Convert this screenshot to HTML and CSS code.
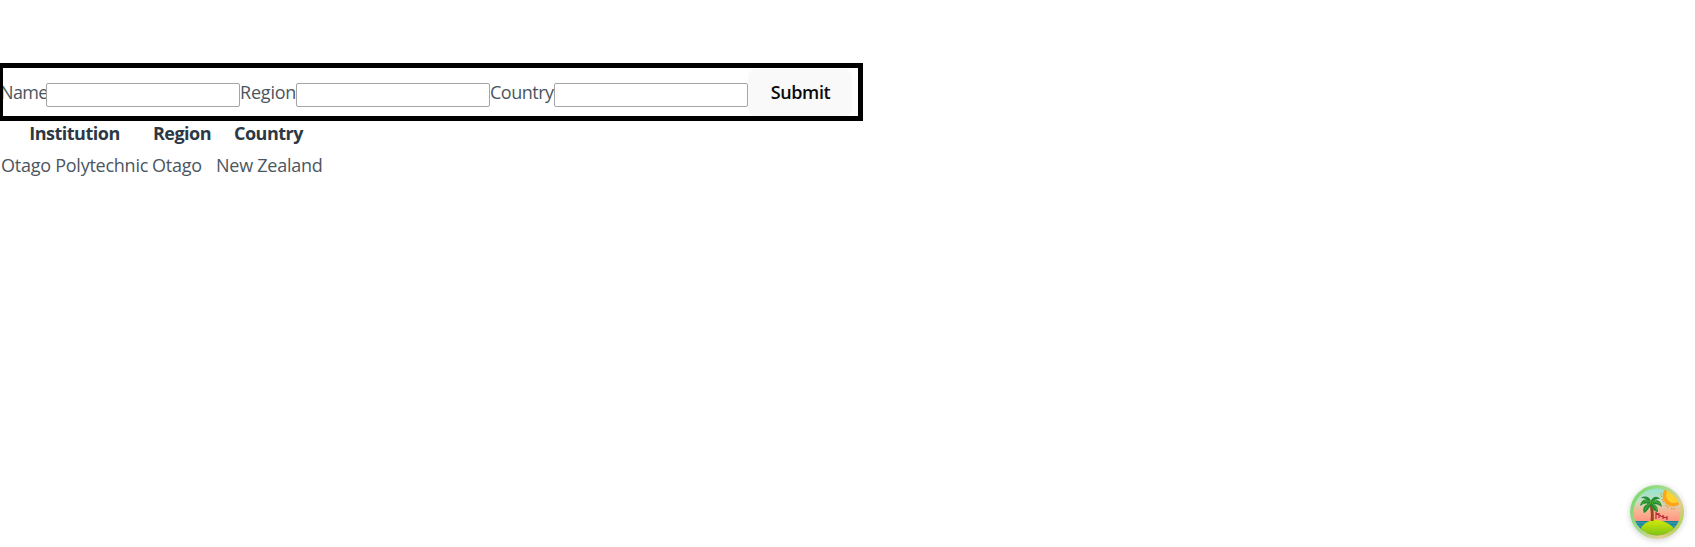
FILE: index.html
```html
<!DOCTYPE html>
<html lang="en">
<head>
<meta charset="utf-8">
<title>Institutions</title>
<link rel="stylesheet" href="styles.css">
</head>
<body>
<main class="page">
  <form class="form">
    <label class="label name" for="name"><span>Name</span></label><input class="field" id="name" type="text">
    <label class="label region" for="region"><span>Region</span></label><input class="field" id="region" type="text">
    <label class="label country" for="country"><span>Country</span></label><input class="field" id="country" type="text">
    <button class="submit" type="button">Submit</button>
    <div class="highlight"></div>
  </form>
  <table class="table">
    <colgroup><col class="c1"><col class="c2"><col class="c3"></colgroup>
    <thead><tr><th>Institution</th><th>Region</th><th>Country</th></tr></thead>
    <tbody><tr><td>Otago Polytechnic</td><td>Otago</td><td>New Zealand</td></tr></tbody>
  </table>
</main>
<button class="devtools" type="button" aria-label="Open query devtools">
  <svg viewBox="0 0 54 54" width="54" height="54">
    <defs>
      <linearGradient id="ring" x1="0" y1="0.2" x2="1" y2="0.8"><stop offset="0" stop-color="#78d86c"/><stop offset=".45" stop-color="#a9dc8c"/><stop offset=".75" stop-color="#e4cd93"/><stop offset="1" stop-color="#9bd63c"/></linearGradient>
      <linearGradient id="sky" x1="0" y1="0" x2="0" y2="1"><stop offset="0" stop-color="#86e3d4"/><stop offset=".3" stop-color="#c5dfc0"/><stop offset=".5" stop-color="#fbb391"/><stop offset=".7" stop-color="#ff8f80"/></linearGradient>
      <linearGradient id="hill" x1="0" y1="0" x2="0" y2="1"><stop offset="0" stop-color="#d4e80a"/><stop offset="1" stop-color="#67b91a"/></linearGradient>
      <clipPath id="disc"><circle cx="27" cy="27" r="23.5"/></clipPath>
    </defs>
    <circle cx="27" cy="27" r="27" fill="url(#ring)"/>
    <g clip-path="url(#disc)">
      <path d="M0 0h54v54H0z" fill="url(#sky)"/>
      <circle cx="43" cy="11" r="10.5" fill="#ffa51c"/>
      <circle cx="44" cy="10" r="8" fill="#ffd22d"/>
      <path d="M31 8l.5 4M32 14l2 4M35.500 20l3 2.500M41 23.500l5 .5" stroke="#ed9b35" stroke-width="1.3" stroke-dasharray="1.500 1" fill="none"/>
      <path d="M0 36h54v10H0z" fill="#19839a"/>
      <path d="M3 38h13M37 38h14M4 41h12M39 41h13" stroke="#47b1b2" stroke-width=".8"/>
      <path d="M7 51C11 39 18 35 26 35s17 5 21 13v6H7z" fill="url(#hill)"/>
      <path d="M22 36c1-7 0-12-1-18" stroke="#98471f" stroke-width="3" fill="none"/>
      <path d="M26 27v7M29 28v5M33 30v4M37 31v4M26 28l5 3M30 31l7 2" stroke="#b92a35" stroke-width="1.2" fill="none"/>
      <path d="M21 17C16 12 11 15 10 21c3-2 5-3 8-2-4 1-6 5-4 9 3-1 5-5 7-8 1 3 3 7 7 7 0-4-1-6-4-8 3 0 5 1 8 3-1-6-4-8-8-6 2-2 4-2 6-2-3-4-8-2-9 2-1-4-6-6-10-3 4 0 6 1 8 4z" fill="#238c35"/>
      <path d="M21 17c-4-2-7-1-9 2M21 18c-3 2-5 4-6 7M22 17c3-1 6 0 8 2M22 18c2 2 4 4 5 7" stroke="#55b52d" stroke-width="1" fill="none"/>
    </g>
  </svg>
</button>
</body>
</html>
```
FILE: styles.css
```css
body {
  margin: 0;
  background: #fff;
  color: #4b5660;
  font: 18px/24px "Segoe UI", "Open Sans", "Noto Sans", sans-serif;
}
.page { padding-top: 68px; }
.form {
  position: relative;
  display: flex;
  align-items: center;
  width: 852px;
  height: 48px;
}
.highlight {
  position: absolute;
  top: -5px;
  left: -2px;
  width: 855px;
  height: 48px;
  border: 5px solid #000;
  pointer-events: none;
}
.label { flex: none; white-space: nowrap; letter-spacing: -0.3px; }
.name { width: 46px; letter-spacing: -0.65px; }
.region { width: 56px; letter-spacing: -0.2px; }
.country { width: 64px; letter-spacing: -0.5px; }
.field {
  box-sizing: border-box;
  flex: none;
  width: 194px;
  height: 24px;
  margin: 5px 0 0;
  border: 1px solid #a5a5a5;
  border-radius: 2px;
  background: #fff;
}
.submit {
  flex: none;
  width: 104px;
  height: 47px;
  padding: 0 0 0 1px;
  border: 0;
  border-radius: 8px;
  background: #f9f9f9;
  color: #0a0a0a;
  font: 600 18px/24px "Segoe UI", "Open Sans", "Noto Sans", sans-serif;
  letter-spacing: -0.35px;
}
.table {
  width: 324px;
  margin-top: 1px;
  table-layout: fixed;
  border-collapse: collapse;
}
.c1 { width: 151px; }
.c2 { width: 64px; }
.c3 { width: 109px; }
.table th, .table td {
  height: 32px;
  padding: 0 0 0 1px;
  text-align: left;
  white-space: nowrap;
  letter-spacing: -0.25px;
}
.table th {
  padding: 0 2px 0 0;
  color: #2c3945;
  font-weight: 700;
  letter-spacing: -0.5px;
  text-align: center;
}
.devtools {
  position: fixed;
  right: 11px;
  bottom: 8px;
  width: 54px;
  height: 54px;
  padding: 0;
  border: 0;
  border-radius: 50%;
  background: none;
  box-shadow: 0 1px 6px rgba(0, 0, 0, .2);
}
.devtools svg { display: block; }
```
